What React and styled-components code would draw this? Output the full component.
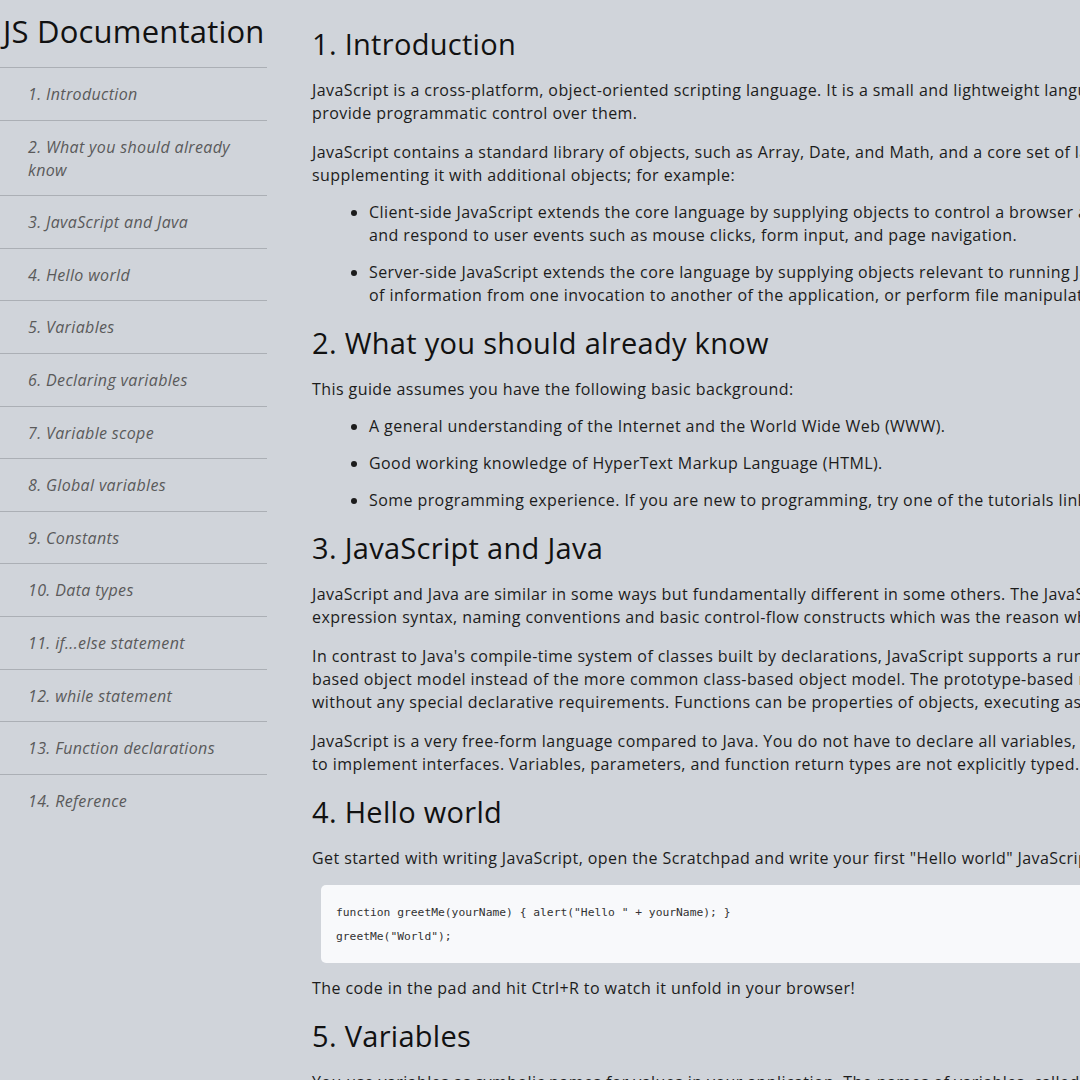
import styled, { createGlobalStyle } from 'styled-components';

const GlobalStyle = createGlobalStyle`
  html, body {
    margin: 0;
    padding: 0;
    overflow: hidden;
    background: #d0d4da;
  }
  body {
    font-family: "Open Sans", "Liberation Sans", sans-serif;
    color: #1c1c1c;
  }
`;

const NAV_ITEMS = [
  '1. Introduction',
  '2. What you should already know',
  '3. JavaScript and Java',
  '4. Hello world',
  '5. Variables',
  '6. Declaring variables',
  '7. Variable scope',
  '8. Global variables',
  '9. Constants',
  '10. Data types',
  '11. if...else statement',
  '12. while statement',
  '13. Function declarations',
  '14. Reference',
];

// line breaks follow the original page's wrapping
const Page = () => {
  return (
    <SPage>
      <GlobalStyle />
      <SSidebar>
        <STitle>JS Documentation</STitle>
        <SNavList>
          {NAV_ITEMS.map((item) => (
            <li key={item}>
              <SNavLink href="#">{item}</SNavLink>
            </li>
          ))}
        </SNavList>
      </SSidebar>

      <SMain>
        <SSection>
          <SHeading>1. Introduction</SHeading>
          <SPara>
            JavaScript is a cross-platform, object-oriented scripting language. It is a small and
            lightweight language. Inside a host environment (for example, a web browser),
            JavaScript can be connected to the objects of its environment to
            <br />
            provide programmatic control over them.
          </SPara>
          <SPara>
            JavaScript contains a standard library of objects, such as Array, Date, and Math, and a
            core set of language elements such as operators, control structures, and statements.
            Core JavaScript can be extended for a variety of purposes by
            <br />
            supplementing it with additional objects; for example:
          </SPara>
          <SList>
            <SItem>
              Client-side JavaScript extends the core language by supplying objects to control a
              browser and its Document Object Model (DOM). For example, client-side extensions allow
              an application to place elements on an HTML form
              <br />
              and respond to user events such as mouse clicks, form input, and page navigation.
            </SItem>
            <SItem>
              Server-side JavaScript extends the core language by supplying objects relevant to
              running JavaScript on a server. For example, server-side extensions allow an
              application to communicate with a database, provide continuity
              <br />
              of information from one invocation to another of the application, or perform file
              manipulations on a server.
            </SItem>
          </SList>
        </SSection>

        <SSection>
          <SHeading>2. What you should already know</SHeading>
          <SPara>This guide assumes you have the following basic background:</SPara>
          <SList>
            <SItem>A general understanding of the Internet and the World Wide Web (WWW).</SItem>
            <SItem>Good working knowledge of HyperText Markup Language (HTML).</SItem>
            <SItem>
              Some programming experience. If you are new to programming, try one of the tutorials
              linked on the main page about JavaScript.
            </SItem>
          </SList>
        </SSection>

        <SSection>
          <SHeading>3. JavaScript and Java</SHeading>
          <SPara>
            JavaScript and Java are similar in some ways but fundamentally different in some
            others. The JavaScript language resembles Java but does not have Java&apos;s static
            typing and strong type checking. JavaScript follows most Java
            <br />
            expression syntax, naming conventions and basic control-flow constructs which was the
            reason why it was renamed from LiveScript to JavaScript.
          </SPara>
          <SPara>
            In contrast to Java&apos;s compile-time system of classes built by declarations,
            JavaScript supports a runtime system based on a small number of data types representing
            numeric, Boolean, and string values. JavaScript has a prototype-
            <br />
            based object model instead of the more common class-based object model. The
            prototype-based model provides dynamic inheritance; that is, what is inherited can vary
            for individual objects. JavaScript also supports functions
            <br />
            without any special declarative requirements. Functions can be properties of objects,
            executing as loosely typed methods.
          </SPara>
          <SPara>
            JavaScript is a very free-form language compared to Java. You do not have to declare all
            variables, classes, and methods. You do not have to be concerned with whether methods
            are public, private, or protected, and you do not have
            <br />
            to implement interfaces. Variables, parameters, and function return types are not
            explicitly typed.
          </SPara>
        </SSection>

        <SSection>
          <SHeading>4. Hello world</SHeading>
          <SPara>
            Get started with writing JavaScript, open the Scratchpad and write your first &quot;Hello
            world&quot; JavaScript code:
          </SPara>
          <SCode>
            {'function greetMe(yourName) { alert("Hello " + yourName); }\ngreetMe("World");'}
          </SCode>
          <SPara>The code in the pad and hit Ctrl+R to watch it unfold in your browser!</SPara>
        </SSection>

        <SSection>
          <SHeading>5. Variables</SHeading>
          <SPara>
            You use variables as symbolic names for values in your application. The names of
            variables, called identifiers, conform to certain rules.
          </SPara>
        </SSection>
      </SMain>
    </SPage>
  );
};

const SPage = styled.div`
  display: flex;
  align-items: flex-start;
  width: 2300px;
`;

const SSidebar = styled.nav`
  width: 267px;
  flex-shrink: 0;
`;

const STitle = styled.h1`
  margin: 0;
  padding: 12px 0 0 3px;
  height: 55px;
  font-size: 31px;
  font-weight: 400;
  line-height: 38px;
  color: #111;
  letter-spacing: 0.2px;
`;

const SNavList = styled.ul`
  list-style: none;
  margin: 0;
  padding: 0;
`;

const SNavLink = styled.a`
  display: block;
  padding: 15px 6px 13.6px 28px;
  border-top: 1px solid #abafb5;
  font-size: 16px;
  font-style: italic;
  line-height: 23px;
  color: #5a5a5a;
  text-decoration: none;
  letter-spacing: 0.35px;
`;

const SMain = styled.main`
  width: 1950px;
  flex-shrink: 0;
  margin-left: 45px;
  padding-top: 26px;
`;

const SSection = styled.section`
  display: flex;
  flex-direction: column;
  padding-bottom: 18px;
`;

const SHeading = styled.h2`
  margin: 0 0 17px;
  font-size: 29px;
  font-weight: 400;
  line-height: 36px;
  color: #111;
  letter-spacing: 0.3px;
`;

const SPara = styled.p`
  margin: 0 0 16px;
  font-size: 16px;
  line-height: 23px;
  letter-spacing: 0.42px;

  &:last-child {
    margin-bottom: 0;
  }
`;

const SList = styled.ul`
  margin: -2px 0 0;
  padding-left: 57px;
`;

const SItem = styled.li`
  margin-bottom: 14px;
  font-size: 16px;
  line-height: 23px;
  letter-spacing: 0.42px;

  &:last-child {
    margin-bottom: 0;
  }
`;

const SCode = styled.pre`
  margin: -1.5px 0 14.5px 9px;
  padding: 16px 15px 14px;
  background: #f8f9fb;
  border-radius: 5px;
  font-family: "DejaVu Sans Mono", "Liberation Mono", monospace;
  font-size: 11.3px;
  line-height: 24px;
  color: #333;
  white-space: pre;
`;

export default Page;
